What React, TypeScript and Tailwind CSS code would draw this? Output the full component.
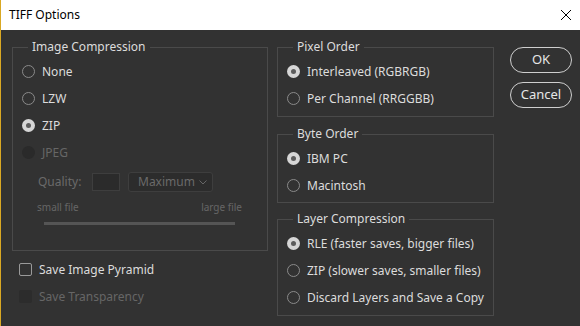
import { ReactNode } from 'react'

const FONT = "font-['Noto_Sans','Open_Sans',sans-serif]"

function Radio({ label, checked, disabled }: { label: string; checked?: boolean; disabled?: boolean }) {
  let dot = 'border border-[#8a8a8a]'
  if (checked) dot = 'bg-[#d6d6d6] flex items-center justify-center'
  if (disabled) dot = 'bg-[#2a2a2a]'
  return (
    <div className="flex h-[27px] items-center gap-[7px] pl-[9px]">
      <span className={`h-[13px] w-[13px] rounded-full shrink-0 ${dot}`}>
        {checked && <span className="h-[5px] w-[5px] rounded-full bg-[#5c5c5c]" />}
      </span>
      <span className={disabled ? 'text-[#666]' : 'text-[#dcdcdc]'}>{label}</span>
    </div>
  )
}

function Group({ title, className, children }: { title: string; className: string; children: ReactNode }) {
  return (
    <fieldset className={`border border-[#4a4a4a] ${className}`}>
      <legend className="ml-[15px] px-[4px] leading-[16px] text-[#dcdcdc]">{title}</legend>
      <div className="pt-[3px]">{children}</div>
    </fieldset>
  )
}

function Check({ label, disabled }: { label: string; disabled?: boolean }) {
  return (
    <div className="flex h-[27px] items-center gap-[7px] pl-[7px]">
      <span
        className={`h-[13px] w-[13px] rounded-[2px] ${
          disabled ? 'bg-[#2c2c2c]' : 'border border-[#9a9a9a]'
        }`}
      />
      <span className={disabled ? 'text-[#666]' : 'text-[#dcdcdc]'}>{label}</span>
    </div>
  )
}

export default function App() {
  return (
    <div className={`${FONT} w-[580px] h-[326px] border-l border-[#d9a823] bg-[#323232] text-[12px] overflow-hidden`}>
      <div className="flex h-[30px] items-center justify-between bg-white pl-[8px] pr-[7px] text-black">
        <span className="text-[12px]">TIFF Options</span>
        <svg width="12" height="12" viewBox="0 0 12 12" className="mr-[1px]">
          <path d="M1 1L11 11M11 1L1 11" stroke="#000" strokeWidth="1" />
        </svg>
      </div>

      <div className="flex items-start pl-[11px] pt-[9px]">
        <div className="flex w-[256px] flex-col">
          <Group title="Image Compression" className="h-[212px]">
            <Radio label="None" />
            <Radio label="LZW" />
            <Radio label="ZIP" checked />
            <Radio label="JPEG" disabled />
            <div className="mt-[6px] flex h-[20px] items-center pl-[25px] text-[#6a6a6a]">
              <span className="w-[54px]">Quality:</span>
              <span className="h-[18px] w-[28px] border border-[#3e3e3e] bg-[#2b2b2b]" />
              <span className="ml-[8px] flex h-[20px] w-[85px] items-center justify-between rounded-[3px] border border-[#3e3e3e] bg-[#2c2c2c] pl-[9px] pr-[5px]">
                Maximum
                <svg width="8" height="5" viewBox="0 0 8 5">
                  <path d="M0.5 0.5L4 4L7.5 0.5" stroke="#666" fill="none" strokeWidth="1" />
                </svg>
              </span>
            </div>
            <div className="mt-[8px] flex justify-between pl-[24px] pr-[25px] text-[10px] leading-[14px] text-[#666]">
              <span>small file</span>
              <span>large file</span>
            </div>
            <div className="ml-[31px] mt-[8px] h-[3px] w-[191px] bg-[#555]" />
          </Group>
          <div className="mt-[5px]">
            <Check label="Save Image Pyramid" />
            <Check label="Save Transparency" disabled />
          </div>
        </div>

        <div className="ml-[9px] flex w-[217px] flex-col">
          <Group title="Pixel Order" className="h-[78px]">
            <Radio label="Interleaved (RGBRGB)" checked />
            <Radio label="Per Channel (RRGGBB)" />
          </Group>
          <Group title="Byte Order" className="mt-[9px] h-[77px]">
            <Radio label="IBM PC" checked />
            <Radio label="Macintosh" />
          </Group>
          <Group title="Layer Compression" className="mt-[8px] h-[105px]">
            <Radio label="RLE (faster saves, bigger files)" checked />
            <Radio label="ZIP (slower saves, smaller files)" />
            <Radio label="Discard Layers and Save a Copy" />
          </Group>
        </div>

        <div className="ml-[16px] mt-[8px] flex flex-col gap-[9px]">
          <button className="h-[26px] w-[62px] rounded-full border border-[#cfcfcf] text-[13px] text-[#e6e6e6]">
            OK
          </button>
          <button className="h-[26px] w-[62px] rounded-full border border-[#cfcfcf] text-[13px] text-[#e6e6e6]">
            Cancel
          </button>
        </div>
      </div>
    </div>
  )
}
